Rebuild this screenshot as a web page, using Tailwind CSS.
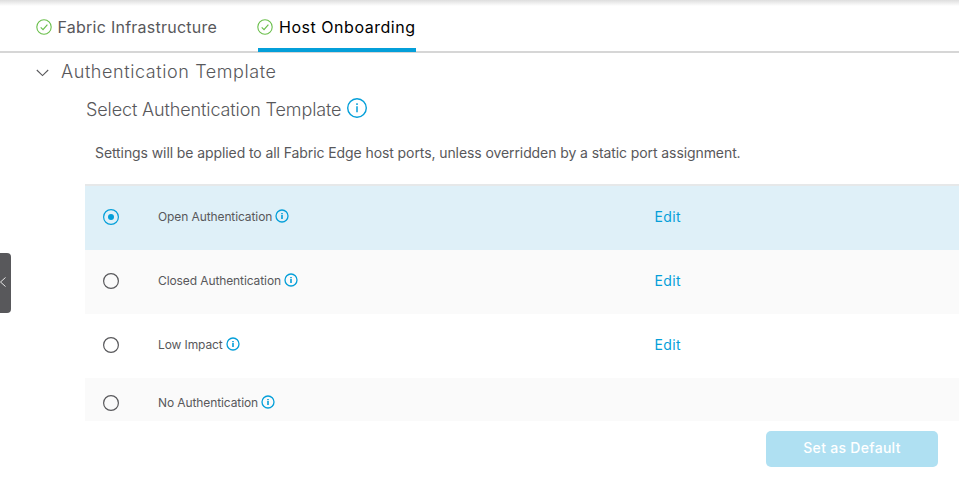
<!DOCTYPE html>
<html lang="en">
<head>
    <meta charset="UTF-8">
    <meta name="viewport" content="width=device-width, initial-scale=1.0">
    <title>Host Onboarding</title>
    <script src="https://cdn.jsdelivr.net/npm/@tailwindcss/browser@4"></script>
</head>
<body class="relative h-[478px] overflow-hidden bg-white font-['Inter','Liberation_Sans',sans-serif] text-[#58585b] whitespace-nowrap">
    <!-- icons shared by the tabs and rows -->
    <svg class="hidden">
        <symbol id="check" viewBox="0 0 16 16">
            <circle cx="8" cy="8" r="7.2" fill="none" stroke="#6abf4b" stroke-width="1.1" />
            <path d="M4.7 8.4 7 10.6 11.4 5.6" fill="none" stroke="#6abf4b" stroke-width="1.2" />
        </symbol>
        <symbol id="info" viewBox="0 0 14 14">
            <circle cx="7" cy="7" r="6" fill="none" stroke="#049fd9" stroke-width="1.3" />
            <path d="M7 6v4M7 3.9v1.3" fill="none" stroke="#049fd9" stroke-width="1.6" />
        </symbol>
    </svg>

    <header class="flex h-[53px] border-b-2 border-[#d6d6d6] bg-linear-to-b from-[#dedede] to-white to-[6px] pl-[36px]">
        <nav aria-label="Fabric tabs" class="flex">
            <a href="#" class="mr-[41px] flex h-[52px] items-center pb-[1px] text-base">
                <svg class="mt-[3px] mr-[6px] -ml-[0.5px] size-4"><use href="#check" /></svg>
                <span class="w-[159.5px] pt-[3px] tracking-[0.25px]">Fabric Infrastructure</span>
            </a>
            <a href="#" class="flex h-[52px] w-[158px] items-center border-b-4 border-[#049fd9] pt-[3px] text-base text-black">
                <svg class="mt-[3px] mr-[6px] -ml-[1px] size-4"><use href="#check" /></svg>
                <span class="pt-[3px] tracking-[0.53px]">Host Onboarding</span>
            </a>
        </nav>
    </header>

    <main>
        <div class="flex h-[38px] items-center pl-[36px]">
            <svg class="mt-[2px] mr-[12px] h-[8px] w-[13px]" viewBox="0 0 13 8"><path d="M.8 1 6.5 6.6 12.2 1" fill="none" stroke="#58585b" stroke-width="1.1" /></svg>
            <h1 class="text-lg font-[350] tracking-[0.59px]">Authentication Template</h1>
        </div>

        <section class="pl-[85px]">
            <div class="flex h-[36px] items-center pl-[1px]">
                <h2 class="w-[255px] pt-[2px] text-lg font-[350] tracking-[-0.12px]">Select Authentication Template</h2>
                <svg class="mb-[2px] ml-[6px] size-[20px]" viewBox="0 0 20 20">
                    <circle cx="10" cy="10" r="9.3" fill="none" stroke="#049fd9" stroke-width="1.4" />
                    <path d="M10 8.3v6M10 5.2v1.8" fill="none" stroke="#049fd9" stroke-width="1.5" />
                </svg>
            </div>
            <p class="flex h-[57px] items-center pb-[6px] pl-[10px] text-sm tracking-[-0.09px]">Settings will be applied to all Fabric Edge host ports, unless overridden by a static port assignment.</p>

            <div class="border-t-2 border-[#e6e8e9]">
                <div class="flex h-[64px] items-center bg-[#dff0f8] pb-[2px]">
                    <div class="flex w-[569px] items-center pl-[18px]">
                        <svg class="size-4" viewBox="0 0 16 16"><circle cx="8" cy="8" r="7.4" fill="none" stroke="#049fd9" stroke-width="1.2" /><circle cx="8" cy="8" r="3" fill="#049fd9" /></svg>
                        <span class="ml-[39px] text-xs tracking-[-0.1px]">Open Authentication</span>
                        <svg class="mb-[2px] ml-[3px] size-[14px]"><use href="#info" /></svg>
                    </div>
                    <a href="#" class="pl-[0.5px] text-sm tracking-[0.4px] text-[#049fd9]">Edit</a>
                </div>
                <div class="flex h-[64px] items-center bg-[#fafafa] pb-[2px]">
                    <div class="flex w-[569px] items-center pl-[18px]">
                        <svg class="size-4" viewBox="0 0 16 16"><circle cx="8" cy="8" r="7.4" fill="none" stroke="#58585b" stroke-width="1.2" /></svg>
                        <span class="ml-[39px] text-xs tracking-[-0.1px]">Closed Authentication</span>
                        <svg class="mb-[2px] ml-[3px] size-[14px]"><use href="#info" /></svg>
                    </div>
                    <a href="#" class="pl-[0.5px] text-sm tracking-[0.4px] text-[#049fd9]">Edit</a>
                </div>
                <div class="flex h-[64px] items-center pb-[2px]">
                    <div class="flex w-[569px] items-center pl-[18px]">
                        <svg class="size-4" viewBox="0 0 16 16"><circle cx="8" cy="8" r="7.4" fill="none" stroke="#58585b" stroke-width="1.2" /></svg>
                        <span class="ml-[39px] text-xs tracking-[-0.1px]">Low Impact</span>
                        <svg class="mb-[2px] ml-[3px] size-[14px]"><use href="#info" /></svg>
                    </div>
                    <a href="#" class="pl-[0.5px] text-sm tracking-[0.4px] text-[#049fd9]">Edit</a>
                </div>
                <div class="flex h-[43px] items-center bg-[#fafafa] pt-[7px]">
                    <div class="flex w-[569px] items-center pl-[18px]">
                        <svg class="size-4" viewBox="0 0 16 16"><circle cx="8" cy="8" r="7.4" fill="none" stroke="#58585b" stroke-width="1.2" /></svg>
                        <span class="ml-[39px] text-xs tracking-[-0.1px]">No Authentication</span>
                        <svg class="mb-[2px] ml-[3px] size-[14px]"><use href="#info" /></svg>
                    </div>
                </div>
            </div>
        </section>

        <div class="flex justify-end pt-[10px] pr-[21px]">
            <button class="h-[36px] w-[172px] rounded-[5px] bg-[#afe0f2] pb-[2px] text-sm font-medium tracking-[0.3px] text-white">Set as Default</button>
        </div>
    </main>

    <!-- side panel handle -->
    <button aria-label="Expand panel" class="absolute top-[253px] left-0 h-[60px] w-[11px] rounded-r-[4px] bg-[#58585b]">
        <svg class="mb-[2px] h-[10px] w-[6px]" viewBox="0 0 6 10"><path d="M5.5.5.5 5l5 4.5" fill="none" stroke="#e8e8e8" stroke-width="1" /></svg>
    </button>
</body>
</html>
